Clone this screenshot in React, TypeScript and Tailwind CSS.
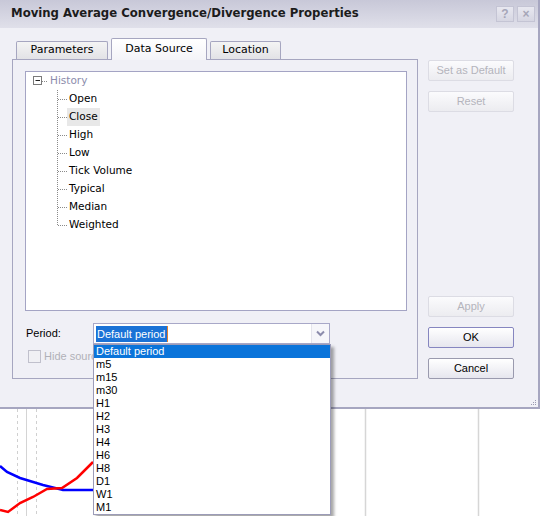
const treeItems = ['Open', 'Close', 'High', 'Low', 'Tick Volume', 'Typical', 'Median', 'Weighted'];
const periods = ['Default period', 'm5', 'm15', 'm30', 'H1', 'H2', 'H3', 'H4', 'H6', 'H8', 'D1', 'W1', 'M1'];

function TitleButton({ label }: { label: string }) {
  return (
    <div className="w-[18px] h-[16px] border border-[#c4c4d4] bg-gradient-to-b from-[#e8e8f0] to-[#d6d6e2] flex items-center justify-center text-[12px] font-bold text-[#a6a6b8] leading-none">
      {label}
    </div>
  );
}

function SideButton({ label, kind }: { label: string; kind: 'disabled' | 'default' | 'normal' }) {
  const cls =
    kind === 'disabled'
      ? 'border-[#dcdce4] text-[#b4b4bc] from-[#fbfbfd] to-[#ececf0]'
      : kind === 'default'
        ? 'border-[#8686c0] text-black from-[#ffffff] to-[#e6e6ee]'
        : 'border-[#9a9aae] text-black from-[#ffffff] to-[#e6e6ee]';
  return (
    <div className={`w-[86px] h-[21px] border rounded-[2px] bg-gradient-to-b flex items-center justify-center text-[11px] ${cls}`}>
      {label}
    </div>
  );
}

function Connector({ last }: { last: boolean }) {
  return (
    <svg width="12" height="18" className="shrink-0">
      <line x1="0.5" y1="0" x2="0.5" y2={last ? 9 : 18} stroke="#8a8a8a" strokeDasharray="1 1" />
      <line x1="1" y1="9.5" x2="10" y2="9.5" stroke="#8a8a8a" strokeDasharray="1 1" />
    </svg>
  );
}

function Tree() {
  return (
    <div className="w-[382px] h-[240px] border border-[#a4a4c4] bg-white font-['DejaVu_Sans',sans-serif] text-[10.5px] text-black">
      <div className="flex items-center h-[18px]">
        <svg width="18" height="18" className="shrink-0 ml-[6px]">
          <rect x="1.5" y="4.5" width="8" height="8" fill="white" stroke="#7a7a7a" />
          <line x1="3.5" y1="8.5" x2="8" y2="8.5" stroke="#222" />
          <line x1="10" y1="9.5" x2="16" y2="9.5" stroke="#8a8a8a" strokeDasharray="1 1" />
        </svg>
        <span className="text-[#8c8cac]">History</span>
      </div>
      {treeItems.map((item, i) => (
        <div key={item} className="flex items-center h-[18px] pl-[31px]">
          <Connector last={i === treeItems.length - 1} />
          <span
            className={`h-[18px] flex items-center -ml-[2px] px-[2px] ${item === 'Close' ? 'bg-[#e8e8e8]' : ''}`}
          >
            {item}
          </span>
        </div>
      ))}
    </div>
  );
}

function PeriodCombo() {
  return (
    <div className="relative w-[237px] h-[21px] border border-[#a8a8c8] bg-white flex items-center text-[11px]">
      <div className="flex-1 pl-[2px] flex items-center">
        <span className="bg-[#1a72d6] text-white h-[16px] leading-[16px] px-[1px] border-r border-[#e08030]">
          Default period
        </span>
      </div>
      <div className="w-[18px] h-full border-l border-[#e4e4ec] bg-[#f6f6fa] flex items-center justify-center">
        <svg width="9" height="7" viewBox="0 0 9 7">
          <path d="M1 1.5 L4.5 5 L8 1.5" fill="none" stroke="#8c8cac" strokeWidth="2" />
        </svg>
      </div>
      <div className="absolute left-[-1px] top-[20px] z-20 w-[238px] border border-[#9c9cb8] bg-white shadow-[3px_3px_3px_rgba(0,0,0,0.35)]">
        {periods.map((p, i) => (
          <div
            key={p}
            className={`h-[13px] leading-[13px] pl-[2px] text-[11px] ${i === 0 ? 'bg-[#0a74da] text-white' : 'text-black'}`}
          >
            {p}
          </div>
        ))}
      </div>
    </div>
  );
}

function Chart() {
  return (
    <div className="h-[107px] bg-white">
      <svg width="540" height="107" className="block">
        <line x1="17.5" y1="0" x2="17.5" y2="107" stroke="#d0d0d0" strokeDasharray="3 3" />
        <line x1="26.5" y1="0" x2="26.5" y2="107" stroke="#d4d4d4" />
        <line x1="36.5" y1="0" x2="36.5" y2="107" stroke="#d0d0d0" strokeDasharray="3 3" />
        <line x1="365.5" y1="0" x2="365.5" y2="107" stroke="#d6d6d6" strokeWidth="1.5" />
        <line x1="478.5" y1="0" x2="478.5" y2="107" stroke="#d6d6d6" strokeWidth="1.5" />
        <polyline
          points="0,57 7,63 20,69 43,76 63,81 93,81"
          fill="none"
          stroke="#0000ff"
          strokeWidth="2.5"
        />
        <polyline
          points="0,101 8,103 20,94 33,88 47,80 62,79 77,69 87,59 93,53"
          fill="none"
          stroke="#ff0000"
          strokeWidth="2.5"
        />
      </svg>
    </div>
  );
}

export default function App() {
  return (
    <div className="w-[540px] h-[516px] overflow-hidden bg-white font-['Liberation_Sans',Arial,sans-serif]">
      <div className="relative z-10 h-[409px] bg-[#f0f0f6] border-r-2 border-b-2 border-[#a6a6c0] flex flex-col">
        <div className="h-[28px] shrink-0 bg-gradient-to-b from-[#c8c8d8] to-[#e0e0ea] flex items-center pl-[11px] pr-[3px]">
          <span className="font-['DejaVu_Sans',sans-serif] font-bold text-[11.7px] text-[#1c1c1c] flex-1">
            Moving Average Convergence/Divergence Properties
          </span>
          <div className="flex gap-[3px]">
            <TitleButton label="?" />
            <TitleButton label="×" />
          </div>
        </div>

        <div className="flex pt-[10px] pl-[12px]">
          <div className="w-[406px]">
            <div className="flex items-end h-[21px] pl-[4px] gap-[3px] font-['DejaVu_Sans',sans-serif] text-[11px]">
              <div className="w-[92px] h-[18px] border border-b-0 border-[#a6a6c0] rounded-t-[2px] bg-gradient-to-b from-[#f4f4f4] to-[#e2e2e6] flex items-center justify-center">
                Parameters
              </div>
              <div className="relative z-10 -mb-px w-[96px] h-[22px] border border-b-0 border-[#a6a6c0] rounded-t-[2px] bg-gradient-to-b from-[#ffffff] to-[#f4f4f8] flex items-center justify-center">
                Data Source
              </div>
              <div className="w-[71px] h-[18px] border border-b-0 border-[#a6a6c0] rounded-t-[2px] bg-gradient-to-b from-[#f4f4f4] to-[#e2e2e6] flex items-center justify-center">
                Location
              </div>
            </div>
            <div className="h-[320px] border border-[#a6a6c0] pt-[11px] px-[12px]">
              <Tree />
              <div className="flex items-center mt-[12px] h-[21px]">
                <span className="w-[68px] pl-[1px] text-[11px]">Period:</span>
                <PeriodCombo />
              </div>
              <div className="flex items-center mt-[6px] ml-[3px] h-[13px] text-[11px] text-[#b0b0b8]">
                <div className="w-[13px] h-[13px] border border-[#c0c0cc] bg-[#f0f0f4] mr-[3px] shrink-0" />
                <span className="w-[50px] overflow-hidden whitespace-nowrap">Hide source</span>
              </div>
            </div>
          </div>

          <div className="ml-[10px] flex flex-col">
            <div className="mt-[22px]">
              <SideButton label="Set as Default" kind="disabled" />
            </div>
            <div className="mt-[10px]">
              <SideButton label="Reset" kind="disabled" />
            </div>
            <div className="mt-[184px]">
              <SideButton label="Apply" kind="disabled" />
            </div>
            <div className="mt-[10px]">
              <SideButton label="OK" kind="default" />
            </div>
            <div className="mt-[10px]">
              <SideButton label="Cancel" kind="normal" />
            </div>
          </div>
        </div>

        <svg width="6" height="6" className="absolute right-[1px] bottom-[1px]">
          <rect x="4" y="0" width="1" height="1" fill="#9a9ab0" />
          <rect x="2" y="2" width="1" height="1" fill="#9a9ab0" />
          <rect x="4" y="2" width="1" height="1" fill="#9a9ab0" />
          <rect x="0" y="4" width="1" height="1" fill="#9a9ab0" />
          <rect x="2" y="4" width="1" height="1" fill="#9a9ab0" />
          <rect x="4" y="4" width="1" height="1" fill="#9a9ab0" />
        </svg>
      </div>
      <Chart />
    </div>
  );
}
